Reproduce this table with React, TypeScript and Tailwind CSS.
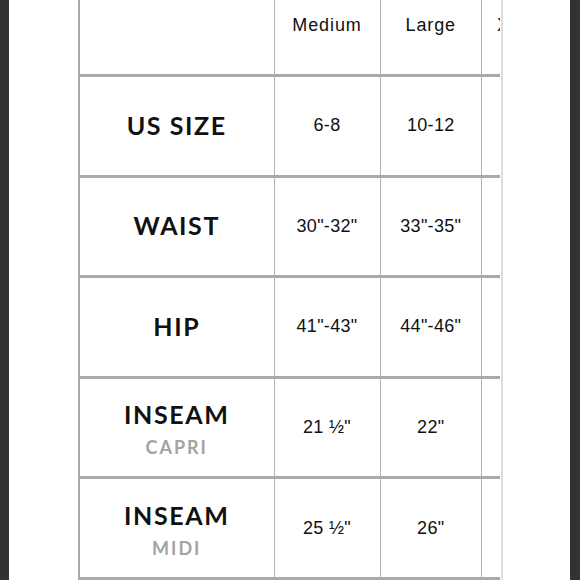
const rows = [
  { label: "US SIZE", sub: "", values: ["6-8", "10-12", "14-16"] },
  { label: "WAIST", sub: "", values: ['30"-32"', '33"-35"', '36"-38"'] },
  { label: "HIP", sub: "", values: ['41"-43"', '44"-46"', '47"-49"'] },
  { label: "INSEAM", sub: "CAPRI", values: ['21 ½"', '22"', '22 ½"'] },
  { label: "INSEAM", sub: "MIDI", values: ['25 ½"', '26"', '26 ½"'] },
];

const sizes = ["Medium", "Large", "X-Large"];

const labelFont = { fontFamily: "Lato, 'Noto Sans', sans-serif" };
const valueFont = { fontFamily: "'Liberation Sans', Arial, sans-serif" };

function Cell({ w, children }: { w: string; children?: React.ReactNode }) {
  return (
    <div
      className={`${w} shrink-0 h-full flex flex-col items-center justify-center border-r-[1.5px] border-[#b3b3b3]`}
    >
      {children}
    </div>
  );
}

export default function App() {
  return (
    <div className="w-[580px] h-[580px] overflow-hidden flex bg-white">
      <div className="w-[9px] h-full bg-[#323232] shrink-0" />
      <div className="w-[69px] shrink-0" />
      <div className="flex h-full shrink-0 border-r-2 border-[#dedede] pr-px">
        <div className="w-[422px] h-full overflow-hidden border-l-2 border-[#a8a8a8]">
          <div className="-mt-[25px] w-[620px]">
            <div className="flex h-[102px] border-b-[3px] border-[#aaaaaa]">
              <Cell w="w-[194.5px]" />
              {sizes.map((s, i) => (
                <Cell key={s} w={i === 0 ? "w-[106px]" : "w-[101.5px]"}>
                  <span
                    style={valueFont}
                    className="text-[18px] tracking-[0.9px] text-[#111] pt-[2px]"
                  >
                    {s}
                  </span>
                </Cell>
              ))}
            </div>
            {rows.map((r, idx) => (
              <div
                key={idx}
                className="flex h-[100.6px] border-b-[3px] border-[#aaaaaa]"
              >
                <Cell w="w-[194.5px]">
                  <div
                    className={`flex flex-col items-center ${r.sub ? "pt-[3px]" : "pb-[2px]"}`}
                  >
                    <span
                      style={labelFont}
                      className="text-[25px] leading-[28px] font-bold tracking-[1.6px] text-[#111]"
                    >
                      {r.label}
                    </span>
                    {r.sub && (
                      <span
                        style={labelFont}
                        className="mt-[8px] text-[18px] leading-[22px] font-bold tracking-[2px] text-[#a3a3a3]"
                      >
                        {r.sub}
                      </span>
                    )}
                  </div>
                </Cell>
                {r.values.map((v, i) => (
                  <Cell key={i} w={i === 0 ? "w-[106px]" : "w-[101.5px]"}>
                    <span
                      style={valueFont}
                      className="text-[18px] tracking-[0.3px] text-[#111]"
                    >
                      {v}
                    </span>
                  </Cell>
                ))}
              </div>
            ))}
          </div>
        </div>
      </div>
      <div className="flex-1" />
      <div className="w-[10px] h-full bg-[#323232] shrink-0" />
    </div>
  );
}
